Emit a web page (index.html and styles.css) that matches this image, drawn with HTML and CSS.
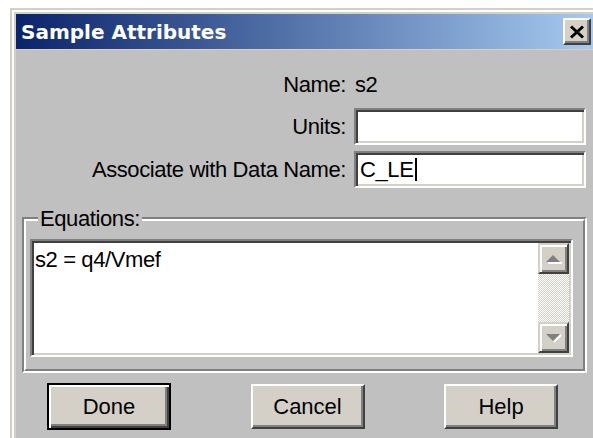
FILE: index.html
```html
<!DOCTYPE html>
<html lang="en">
<head>
<meta charset="utf-8">
<title>Sample Attributes</title>
<link rel="stylesheet" href="styles.css">
</head>
<body>
<div class="window">
  <div class="titlebar">
    <span class="title">Sample Attributes</span>
    <button class="close" type="button" aria-label="Close">
      <svg width="16" height="14" viewBox="0 0 16 14"><path d="M2 1.5 14 12.5M14 1.5 2 12.5" stroke="#000" stroke-width="3" fill="none"/></svg>
    </button>
  </div>
  <div class="client">
    <div class="fields">
      <span class="label">Name:</span><span class="value">s2</span>
      <span class="label">Units:</span><div class="input"></div>
      <span class="label">Associate with Data Name:</span><div class="input">C_LE<span class="caret"></span></div>
    </div>
    <div class="group">
      <div class="group-inner">
        <div class="group-title">Equations:</div>
        <div class="memo">
          <div class="memo-text">s2 = q4/Vmef</div>
          <div class="vscroll">
            <div class="sb-btn">
              <svg width="18" height="10" viewBox="0 0 18 10"><path d="M3 9h14" stroke="#fff" stroke-width="2"/><path d="M8 1 1 8h14z" fill="#808080"/></svg>
            </div>
            <div class="sb-track"></div>
            <div class="sb-btn">
              <svg width="18" height="10" viewBox="0 0 18 10"><path d="M9 9l7-7" stroke="#fff" stroke-width="2"/><path d="M1 1h14L8 8z" fill="#808080"/></svg>
            </div>
          </div>
        </div>
      </div>
    </div>
    <div class="buttons">
      <button class="btn is-default" type="button">Done</button>
      <button class="btn" type="button">Cancel</button>
      <button class="btn" type="button">Help</button>
    </div>
  </div>
</div>
</body>
</html>
```
FILE: styles.css
```css
* { box-sizing: border-box; }

html, body {
  margin: 0;
  overflow: hidden;
}

body {
  width: 593px;
  height: 438px;
  background: #fff;
  color: #000;
  font-family: "Liberation Sans", Arial, sans-serif;
  font-size: 22px;
  letter-spacing: -0.4px;
}

/* dialog frame */
.window {
  width: 591px;
  margin: 8px 0 0 10px;
  padding: 4px;
  background: #d4d0c8;
  border: 2px solid #d4d0c8;
  box-shadow: inset 2px 2px #fff;
}

.titlebar {
  display: flex;
  align-items: center;
  justify-content: space-between;
  height: 35px;
  padding: 0 4px 0 5px;
  background: linear-gradient(to right, #0a246a, #a6caf0);
}

.title {
  font-family: "DejaVu Sans", sans-serif;
  font-weight: bold;
  font-size: 20px;
  letter-spacing: 0;
  color: #fff;
}

.close {
  display: flex;
  align-items: center;
  justify-content: center;
  width: 28px;
  height: 27px;
  padding: 0;
  background: #d4d0c8;
  border: 2px solid;
  border-color: #fff #404040 #404040 #fff;
  box-shadow: inset -2px -2px #808080;
}

.client {
  height: 400px;
  margin-top: 1px;
  padding: 18px 8px 0 6px;
  background: #c0c0c0;
}

/* label / value rows */
.fields {
  display: grid;
  grid-template-columns: 1fr 232px;
  grid-template-rows: 34px 37px 37px;
  column-gap: 8px;
  row-gap: 6px;
  align-items: center;
  margin-right: 1px;
}

.label { text-align: right; }
.value { padding-left: 1px; }

.input {
  display: flex;
  align-items: center;
  height: 37px;
  padding: 0 4px;
  background: #fff;
  border: 2px solid;
  border-color: #808080 #fff #fff #808080;
  box-shadow: inset 2px 2px #404040, inset -2px -2px #d4d0c8;
}

.caret {
  width: 2px;
  height: 23px;
  margin-left: 2px;
  background: #000;
}

/* etched group box */
.group {
  margin-top: 29px;
  border: 2px solid;
  border-color: #808080 #fff #fff #808080;
}

.group-inner {
  padding: 0 10px 12px 4px;
  border: 2px solid;
  border-color: #fff #808080 #808080 #fff;
}

.group-title {
  width: fit-content;
  margin: -15px 0 0 8px;
  padding: 0 2px;
  line-height: 25px;
  background: #c0c0c0;
}

.memo {
  display: flex;
  height: 118px;
  margin-top: 8px;
  padding: 2px;
  background: #fff;
  border: 2px solid;
  border-color: #808080 #fff #fff #808080;
  box-shadow: inset 2px 2px #404040, inset -2px -2px #d4d0c8;
}

.memo-text {
  flex: 1;
  padding: 4px 1px;
  line-height: 25px;
}

.vscroll {
  display: flex;
  flex-direction: column;
  width: 31px;
}

.sb-btn {
  display: flex;
  align-items: center;
  justify-content: center;
  height: 31px;
  background: #d4d0c8;
  border: 2px solid;
  border-color: #d4d0c8 #404040 #404040 #d4d0c8;
  box-shadow: inset 2px 2px #fff, inset -2px -2px #808080;
}

.sb-track {
  flex: 1;
  background: repeating-conic-gradient(#d4d0c8 0 25%, #fff 0 50%) 0 0 / 2px 2px;
}

/* command buttons */
.buttons {
  display: flex;
  align-items: center;
  justify-content: space-between;
  margin-top: 10px;
  padding: 0 29px 0 25px;
}

.btn {
  width: 114px;
  height: 45px;
  padding: 0;
  font: inherit;
  color: #000;
  background: #d4d0c8;
  border: 2px solid;
  border-color: #fff #404040 #404040 #fff;
  box-shadow: inset -2px -2px #808080;
}

.btn.is-default {
  width: 124px;
  height: 47px;
  border: 2px solid #000;
  box-shadow: inset 2px 2px #fff, inset -2px -2px #404040, inset -4px -4px #808080;
}
```
